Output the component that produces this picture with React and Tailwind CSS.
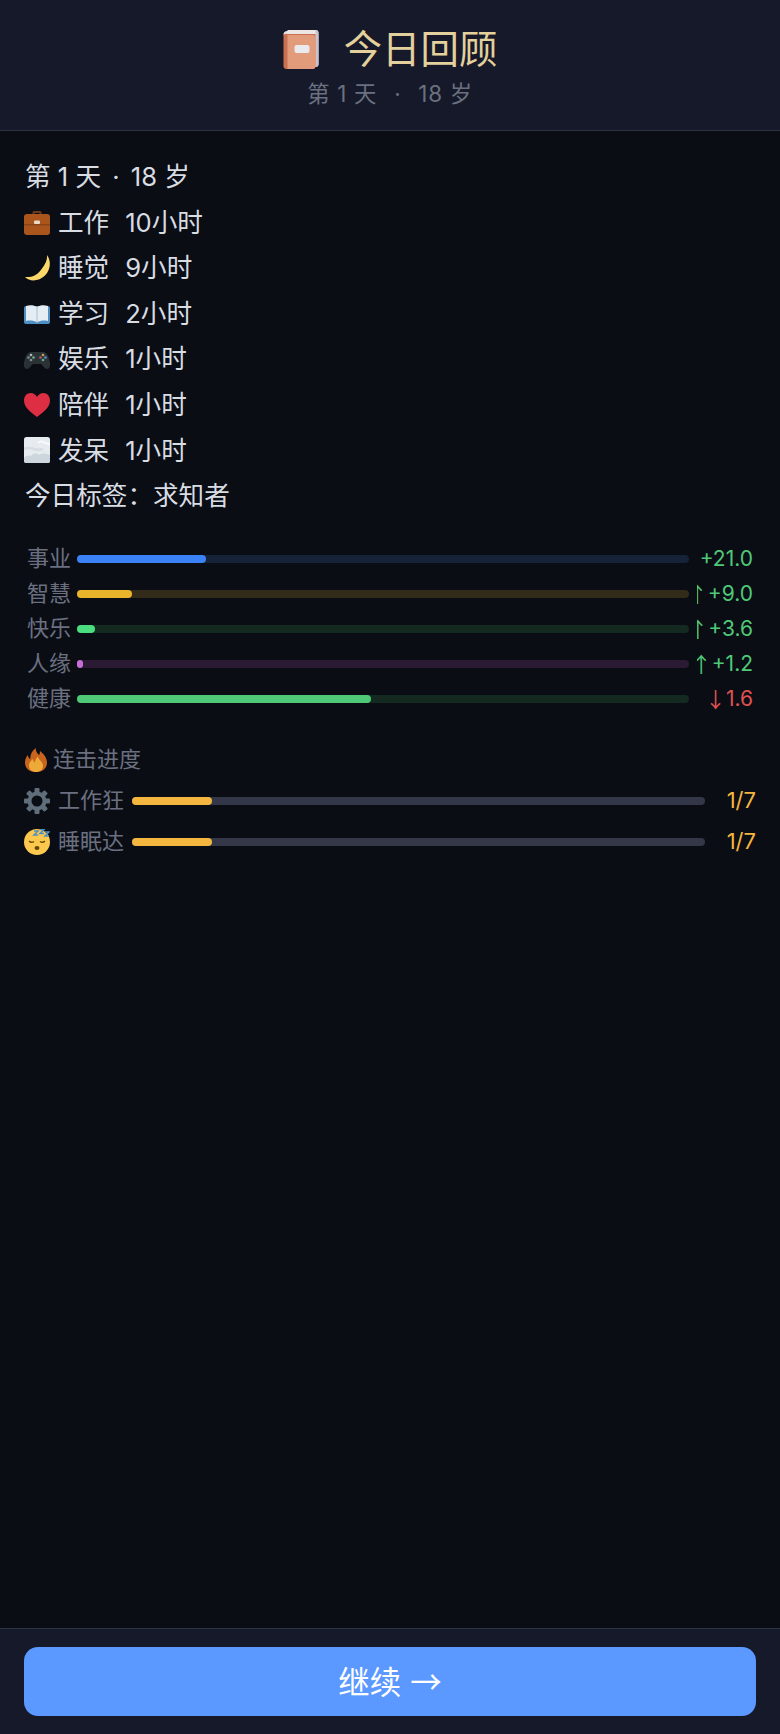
const FONT = "font-['Inter','Noto_Sans_CJK_SC',sans-serif]";
const CJK = "font-['Noto_Sans_CJK_SC',sans-serif]";

function BookIcon({ className }) {
  return (
    <svg viewBox="0 0 36 40" className={className}>
      <path d="M4 1h28a3 3 0 0 1 3 3v31a3 3 0 0 1-3 3h-2V6H4z" fill="#f1e4de" />
      <path d="M32 1a3 3 0 0 1 3 3v31a3 3 0 0 1-3 3z" fill="#c9c3cf" />
      <rect x="0" y="3" width="32" height="37" rx="3" fill="#c8704f" />
      <path d="M4 6h25a3 3 0 0 1 3 3v28a3 3 0 0 1-3 3H4z" fill="#e29b7b" />
      <path d="M0 6a4 4 0 0 1 4-4h26a2 2 0 0 1 2 2v1H4a4 4 0 0 0-4 1z" fill="#ece6e4" />
      <rect x="11" y="16" width="15" height="8" rx="2" fill="#e9e9ee" />
    </svg>
  );
}

function BriefcaseIcon({ className }) {
  return (
    <svg viewBox="0 0 26 26" className={className}>
      <path d="M8.5 6V3.5A1.5 1.5 0 0 1 10 2h6a1.5 1.5 0 0 1 1.5 1.5V6h-2V4h-5v2z" fill="#6b3a1c" />
      <rect x="0" y="5" width="26" height="21" rx="3" fill="#a9551c" />
      <path d="M0 15h26v1.5H0z" fill="#7d3d14" opacity="0.7" />
      <rect x="10" y="11.5" width="6" height="3.5" rx="1" fill="#e8dcc8" />
    </svg>
  );
}

function MoonIcon({ className }) {
  return (
    <svg viewBox="0 0 26 26" className={className}>
      <path d="M23 0c4.500 6 3.500 15-2 20.500S6 27.500 1 22c7 .5 11.500-1.500 15.500-6.500S23.500 6 23 0z" fill="#fcd76a" />
    </svg>
  );
}

function OpenBookIcon({ className }) {
  return (
    <svg viewBox="0 0 26 26" className={className}>
      <path d="M0 7a2 2 0 0 1 2-2h22a2 2 0 0 1 2 2v14a2 2 0 0 1-2 2H2a2 2 0 0 1-2-2z" fill="#4f8fc4" />
      <path d="M2 5c4-1.500 8-1 11 1 3-2 7-2.500 11-1v15c-4-1-8-.5-11 1.500-3-2-7-2.500-11-1.500z" fill="#e4edf4" />
      <path d="M13 6v15.500" stroke="#a9c0d2" strokeWidth="1" />
    </svg>
  );
}

function GamepadIcon({ className }) {
  return (
    <svg viewBox="0 0 26 26" className={className}>
      <path d="M7 6h12c4 0 6 5 7 11 .5 4-1 6-3 6-3 0-4-4-6-5H9c-2 1-3 5-6 5-2 0-3.500-2-3-6C1 11 3 6 7 6z" fill="#2a3236" />
      <circle cx="7" cy="9" r="1.300" fill="#aeb9bd" />
      <circle cx="7" cy="14" r="1.300" fill="#7d8f95" />
      <circle cx="4.500" cy="11.500" r="1.300" fill="#7d8f95" />
      <circle cx="9.500" cy="11.500" r="1.300" fill="#6fae8a" />
      <circle cx="19" cy="9" r="1.300" fill="#c9a050" />
      <circle cx="19" cy="14" r="1.300" fill="#62a98c" />
      <circle cx="16.500" cy="11.500" r="1.300" fill="#b2566a" />
      <circle cx="21.500" cy="11.500" r="1.300" fill="#5d93c4" />
    </svg>
  );
}

function HeartIcon({ className }) {
  return (
    <svg viewBox="0 0 26 26" className={className}>
      <path d="M13 25C8 21 0 16 0 8.500 0 4 3 1 6.500 1 9.500 1 12 2.800 13 5c1-2.200 3.500-4 6.500-4C23 1 26 4 26 8.500 26 16 18 21 13 25z" fill="#dd2e44" />
    </svg>
  );
}

function FogIcon({ className }) {
  return (
    <svg viewBox="0 0 26 26" className={className}>
      <rect width="26" height="26" rx="2.500" fill="#e6ebef" />
      <path d="M0 21c2-3 5-3 7-2 2-3 6-3 8-1 3-2 7-2 11 0v5.500a2.500 2.500 0 0 1-2.500 2.500h-21A2.500 2.500 0 0 1 0 23.500z" fill="#ced6dd" />
      <path d="M14 6c2-2 5-2 7 0 2 0 3 1 5 1" stroke="#f8f9fb" strokeWidth="2" fill="none" />
      <path d="M0 12c4-2 7-1 10 0s6 1 9 0" stroke="#d5dce2" strokeWidth="2.500" fill="none" />
    </svg>
  );
}

function FireIcon({ className }) {
  return (
    <svg viewBox="0 0 22 24" className={className}>
      <path d="M11 24C5 24 0 21 0 14.500 0 11 1.500 8.500 3 7c0 2 .8 3.500 2.300 4C5 7 7 2.500 11 0c-.5 3 1 5 3 7 .8-1 1-2.500 1-4 4 3 7 7 7 11.500C22 21 17 24 11 24z" fill="#c9641f" />
      <path d="M11 24c-4 0-7-2.500-7-6.500 0-3 2-5 4-6.500 0 2 1 3 2 3.500C10 12 11 10 13 8.500c0 3 5 5 5 9.500 0 3.500-3 6-7 6z" fill="#eeaa38" />
    </svg>
  );
}

function GearIcon({ className }) {
  return (
    <svg viewBox="0 0 26 26" className={className}>
      <g fill="#5f6e7a">
        <rect x="10.500" y="0" width="5" height="26" rx="1" />
        <rect x="10.500" y="0" width="5" height="26" rx="1" transform="rotate(45 13 13)" />
        <rect x="10.500" y="0" width="5" height="26" rx="1" transform="rotate(90 13 13)" />
        <rect x="10.500" y="0" width="5" height="26" rx="1" transform="rotate(135 13 13)" />
      </g>
      <circle cx="13" cy="13" r="7.500" fill="none" stroke="#5f6e7a" strokeWidth="4" />
      <circle cx="13" cy="13" r="5.500" fill="#0a0d14" />
    </svg>
  );
}

function SleepIcon({ className }) {
  return (
    <svg viewBox="0 0 26 26" className={className}>
      <circle cx="13" cy="13" r="13" fill="#fcc94e" />
      <path d="M5 12c1.500 1.500 3.500 1.500 5 .5M16 12.500c1.500 1 3.500 1 5-.5" stroke="#664500" strokeWidth="1.300" fill="none" />
      <ellipse cx="13" cy="19" rx="2.500" ry="2" fill="#664500" />
      <path d="M10 2h4l-4 4h4M16 .5h4l-4 4h4M21 3h4l-4 4h4" stroke="#4f8fc4" strokeWidth="1.500" fill="none" />
    </svg>
  );
}

const activities = [
  { Icon: BriefcaseIcon, name: "工作", hours: "10小时" },
  { Icon: MoonIcon, name: "睡觉", hours: "9小时" },
  { Icon: OpenBookIcon, name: "学习", hours: "2小时" },
  { Icon: GamepadIcon, name: "娱乐", hours: "1小时" },
  { Icon: HeartIcon, name: "陪伴", hours: "1小时" },
  { Icon: FogIcon, name: "发呆", hours: "1小时" },
];

const stats = [
  { label: "事业", pct: 21, fill: "bg-[#3b82f6]", track: "bg-[#162238]", arrow: "", value: "+21.0", tone: "text-[#4fc978]" },
  { label: "智慧", pct: 9, fill: "bg-[#e9b42c]", track: "bg-[#322b1a]", arrow: "↑", value: "+9.0", tone: "text-[#4fc978]" },
  { label: "快乐", pct: 3, fill: "bg-[#4ade80]", track: "bg-[#14291f]", arrow: "↑", value: "+3.6", tone: "text-[#4fc978]" },
  { label: "人缘", pct: 1, fill: "bg-[#c96dd8]", track: "bg-[#2a1a33]", arrow: "↑", value: "+1.2", tone: "text-[#4fc978]" },
  { label: "健康", pct: 48, fill: "bg-[#4fc978]", track: "bg-[#14291f]", arrow: "↓", value: "1.6", tone: "text-[#e05252]" },
];

const streaks = [
  { Icon: GearIcon, label: "工作狂" },
  { Icon: SleepIcon, label: "睡眠达" },
];

export default function App() {
  return (
    <div className={`flex flex-col h-[1734px] bg-[#0a0d14] ${FONT}`}>
      <header className="h-[131px] flex flex-col items-center bg-[#151929] border-b border-[#2d3244] pt-[24px]">
        <div className="flex items-center h-[50px]">
          <BookIcon className="w-[37px] h-[40px] mr-[24px]" />
          <h1 className="text-[38.400px] leading-[50px] text-[#e3d09c]">今日回顾</h1>
        </div>
        <p className="text-[22.400px] leading-[32px] tracking-[0.700px] text-[#6b7080] mt-[4px] whitespace-pre">
          第 1 天 <span className="mx-[10px]">·</span> 18 岁
        </p>
      </header>

      <main className="flex-1 px-[24px] pt-[23px]">
        <div className="text-[25.600px] leading-[45.600px] text-[#d8dce3]">
          <div className="pl-[1px] whitespace-pre">
            第 1 天 <span className="mx-[4px]">·</span> 18 岁
          </div>
          {activities.map(({ Icon, name, hours }) => (
            <div key={name} className="flex items-center whitespace-pre">
              <Icon className="w-[26px] h-[26px] mr-[8px]" />
              {name}
              <span className="ml-[16px]">{hours}</span>
            </div>
          ))}
          <div className="pl-[1px]">今日标签：求知者</div>
        </div>

        <div className="mt-[26px] flex flex-col gap-[7px]">
          {stats.map((s) => (
            <div key={s.label} className="flex items-center h-[28px]">
              <span className="w-[53px] pl-[3px] text-[22px] text-[#6b7080] whitespace-nowrap">{s.label}</span>
              <div className={`w-[612px] h-[8px] rounded-full ${s.track}`}>
                <div className={`h-full rounded-full ${s.fill}`} style={{ width: `${s.pct}%` }} />
              </div>
              <span className={`ml-[8px] w-[56px] flex justify-end overflow-hidden text-[21px] whitespace-pre ${s.tone}`}>
                {s.arrow && <span className={CJK}>{s.arrow}</span>}
                {s.value}
              </span>
            </div>
          ))}
        </div>

        <div className="mt-[31px] flex items-center h-[32px] text-[22px] text-[#6b7080]">
          <FireIcon className="w-[22px] h-[24px] mr-[6px] ml-[1px]" />
          连击进度
        </div>
        <div className="mt-[11px] flex flex-col gap-[13px]">
          {streaks.map(({ Icon, label }) => (
            <div key={label} className="flex items-center h-[28px]">
              <Icon className="w-[26px] h-[26px] mr-[8px]" />
              <span className="w-[74px] text-[22px] text-[#6b7080] whitespace-nowrap">{label}</span>
              <div className="w-[573px] h-[8px] rounded-full bg-[#333748]">
                <div className="h-full w-[14%] rounded-full bg-[#f5b63f]" />
              </div>
              <span className="ml-auto text-[22px] text-[#f5b63f]">1/7</span>
            </div>
          ))}
        </div>
      </main>

      <footer className="h-[106px] bg-[#151929] border-t border-[#2d3244] px-[24px] pt-[18px]">
        <button className="w-full h-[69px] rounded-[14px] bg-[#5b98ff] text-white text-[31.500px]">
          继续 <span className={CJK}>→</span>
        </button>
      </footer>
    </div>
  );
}
